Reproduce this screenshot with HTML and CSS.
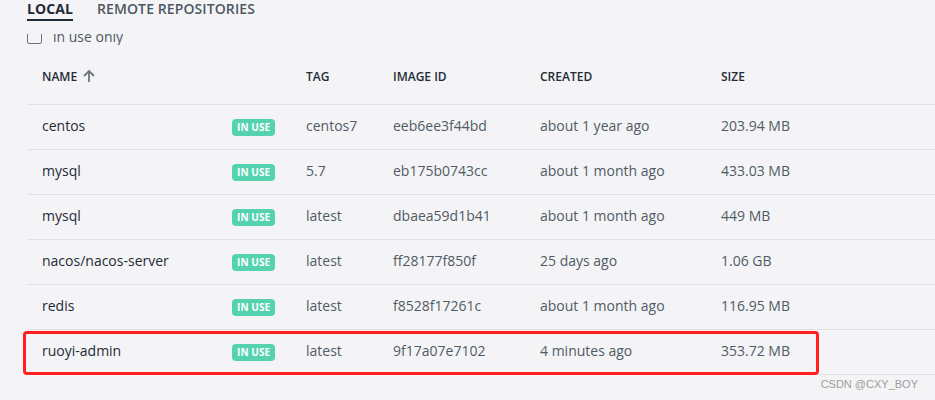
FILE: index.html
```html
<!DOCTYPE html>
<html lang="en">
<head>
  <meta charset="UTF-8">
  <title>Images</title>
  <link rel="stylesheet" href="styles.css">
</head>
<body>
  <div class="page">
    <div class="tabs">
      <span class="tab active">LOCAL</span>
      <span class="tab">REMOTE REPOSITORIES</span>
    </div>

    <div class="filter">
      <label class="check"><span class="box"></span> in use only</label>
    </div>

    <div class="images">
      <div class="row head">
        <span class="name">NAME <svg class="arrow" width="14" height="14" viewBox="0 0 14 14"><path d="M7 13V2M2 7l5-5 5 5" fill="none" stroke="#6c7680" stroke-width="1.8"/></svg></span>
        <span>TAG</span>
        <span>IMAGE ID</span>
        <span>CREATED</span>
        <span>SIZE</span>
      </div>

      <div class="row">
        <span class="name">centos</span>
        <span><em class="badge">IN USE</em></span>
        <span>centos7</span>
        <span>eeb6ee3f44bd</span>
        <span>about 1 year ago</span>
        <span>203.94 MB</span>
      </div>
      <div class="row">
        <span class="name">mysql</span>
        <span><em class="badge">IN USE</em></span>
        <span>5.7</span>
        <span>eb175b0743cc</span>
        <span>about 1 month ago</span>
        <span>433.03 MB</span>
      </div>
      <div class="row">
        <span class="name">mysql</span>
        <span><em class="badge">IN USE</em></span>
        <span>latest</span>
        <span>dbaea59d1b41</span>
        <span>about 1 month ago</span>
        <span>449 MB</span>
      </div>
      <div class="row">
        <span class="name">nacos/nacos-server</span>
        <span><em class="badge">IN USE</em></span>
        <span>latest</span>
        <span>ff28177f850f</span>
        <span>25 days ago</span>
        <span>1.06 GB</span>
      </div>
      <div class="row">
        <span class="name">redis</span>
        <span><em class="badge">IN USE</em></span>
        <span>latest</span>
        <span>f8528f17261c</span>
        <span>about 1 month ago</span>
        <span>116.95 MB</span>
      </div>
      <div class="row">
        <span class="name">ruoyi-admin</span>
        <span><em class="badge">IN USE</em></span>
        <span>latest</span>
        <span>9f17a07e7102</span>
        <span>4 minutes ago</span>
        <span>353.72 MB</span>
      </div>

      <div class="mark"></div>
    </div>
  </div>
  <div class="watermark">CSDN @CXY_BOY</div>
</body>
</html>
```

FILE: styles.css
```css
body {
  margin: 0;
  background: #f4f4f6;
  font-family: "Open Sans", sans-serif;
  color: #1f2b37;
  height: 400px;
  overflow: hidden;
}
.page {
  padding-left: 27px;
}
.tabs {
  display: flex;
  gap: 24px;
  height: 34px;
  align-items: flex-start;
}
.tab {
  font-size: 14px;
  font-weight: 600;
  line-height: 17px;
  padding-bottom: 2px;
  color: #4d5863;
  letter-spacing: 0.1px;
}
.tab.active {
  font-weight: 700;
  color: #1f2b37;
  border-bottom: 2px solid #1f2b37;
}
.filter {
  height: 11px;
  overflow: hidden;
  display: flex;
  align-items: flex-end;
}
.check {
  display: flex;
  align-items: flex-end;
  gap: 11px;
  font-size: 14px;
  line-height: 20px;
  color: #4d5863;
  height: 20px;
  flex-shrink: 0;
  margin-bottom: -2px;
}
.box {
  width: 13px;
  height: 13px;
  border: 1.5px solid #6c7680;
  border-radius: 2px;
  margin-bottom: 3px;
}
.images {
  position: relative;
  margin-top: 23px;
}
.row {
  display: grid;
  grid-template-columns: 190px 74px 87px 147px 181px 1fr;
  align-items: center;
  height: 41px;
  padding: 0 0 3px 15px;
  border-bottom: 1px solid #e1e1e4;
  font-size: 14px;
  color: #505b66;
}
.row .name {
  color: #1f2b37;
}
.row.head {
  grid-template-columns: 264px 87px 147px 181px 1fr;
  height: 36px;
  padding-bottom: 0;
  align-items: start;
  font-size: 12px;
  font-weight: 600;
  color: #1f2b37;
}
.arrow {
  margin-left: 2px;
  vertical-align: -2px;
}
.badge {
  display: inline-block;
  font-style: normal;
  background: #55d3b0;
  color: white;
  font-size: 10px;
  font-weight: 700;
  line-height: 17px;
  height: 17px;
  padding: 0 5px;
  border-radius: 4px;
  margin-top: 4px;
  letter-spacing: 0.1px;
}
.mark {
  position: absolute;
  left: -4px;
  top: 263px;
  width: 790px;
  height: 38px;
  border: 3px solid #ff1f1f;
  border-radius: 4px;
}
.watermark {
  position: absolute;
  right: 17px;
  top: 378px;
  font-family: "Liberation Sans", Arial, sans-serif;
  font-size: 11px;
  color: #9c9c9c;
}
```
